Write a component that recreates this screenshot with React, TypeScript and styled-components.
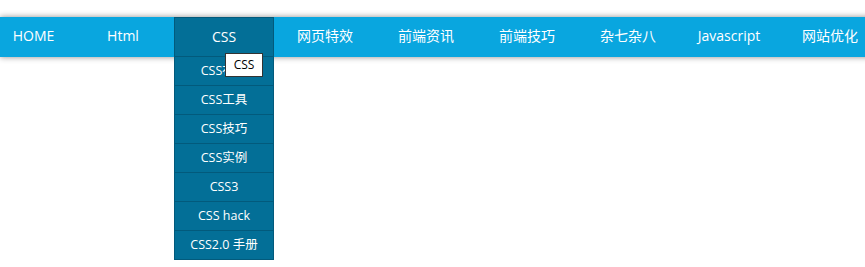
import styled, { createGlobalStyle } from 'styled-components'

const GlobalStyle = createGlobalStyle`
  html, body {
    margin: 0;
    padding: 0;
    background: #fff;
    overflow: hidden;
  }
  body {
    font-family: "Open Sans", "Noto Sans CJK SC", sans-serif;
  }
`

const menu = [
  { label: 'HOME', first: true },
  { label: 'Html' },
  {
    label: 'CSS',
    active: true,
    children: ['CSS布局', 'CSS工具', 'CSS技巧', 'CSS实例', 'CSS3', 'CSS hack', 'CSS2.0 手册'],
  },
  { label: '网页特效' },
  { label: '前端资讯' },
  { label: '前端技巧' },
  { label: '杂七杂八' },
  { label: 'Javascript' },
  { label: '网站优化' },
]

export default function App() {
  return (
    <>
      <GlobalStyle />
      <Page>
        <NavBar>
          {menu.map((item) => (
            <NavItem key={item.label} $first={item.first} $active={item.active}>
              <NavLink $first={item.first}>{item.label}</NavLink>
              {item.children ? (
                <SubMenu>
                  {item.children.map((child, i) => (
                    <SubItem key={child}>
                      {child}
                      {i === 0 ? <Tooltip>CSS</Tooltip> : null}
                    </SubItem>
                  ))}
                </SubMenu>
              ) : null}
            </NavItem>
          ))}
        </NavBar>
      </Page>
    </>
  )
}

const Page = styled.div`
  width: 865px;
  height: 267px;
  padding-top: 17px;
  box-sizing: border-box;
  overflow: hidden;
`

const NavBar = styled.ul`
  display: flex;
  gap: 1px;
  width: 900px;
  height: 40px;
  margin: 0;
  padding: 0;
  list-style: none;
  background: #09a6df;
  box-shadow: 0 0 6px rgba(0, 0, 0, 0.45);
`

const NavItem = styled.li<{ $first?: boolean; $active?: boolean }>`
  position: relative;
  flex: 0 0 ${(p) => (p.$first ? '72px' : '100px')};
  box-sizing: border-box;
  height: 40px;
  background: ${(p) => (p.$active ? '#036f97' : 'transparent')};
  border: ${(p) => (p.$active ? '1px solid #025a7c' : 'none')};
`

const NavLink = styled.a<{ $first?: boolean }>`
  display: block;
  height: 100%;
  padding-right: ${(p) => (p.$first ? '5px' : '0')};
  line-height: 38px;
  text-align: center;
  font-size: 14px;
  color: #fff;
  text-decoration: none;
`

const SubMenu = styled.ul`
  position: absolute;
  top: 38px;
  left: -1px;
  width: 100px;
  margin: 0;
  padding: 0;
  list-style: none;
  background: #036f97;
  border: 1px solid #025a7c;
  border-bottom: none;
  box-sizing: border-box;
`

const SubItem = styled.li`
  position: relative;
  height: 29px;
  line-height: 28px;
  border-bottom: 1px solid #025a7c;
  box-sizing: border-box;
  text-align: center;
  font-size: 12.5px;
  color: #fff;
`

const Tooltip = styled.span`
  position: absolute;
  top: -4px;
  left: 50px;
  width: 38px;
  height: 24px;
  box-sizing: border-box;
  background: #fff;
  border: 1px solid #333;
  color: #000;
  font-size: 12px;
  line-height: 21px;
  text-align: center;
`
